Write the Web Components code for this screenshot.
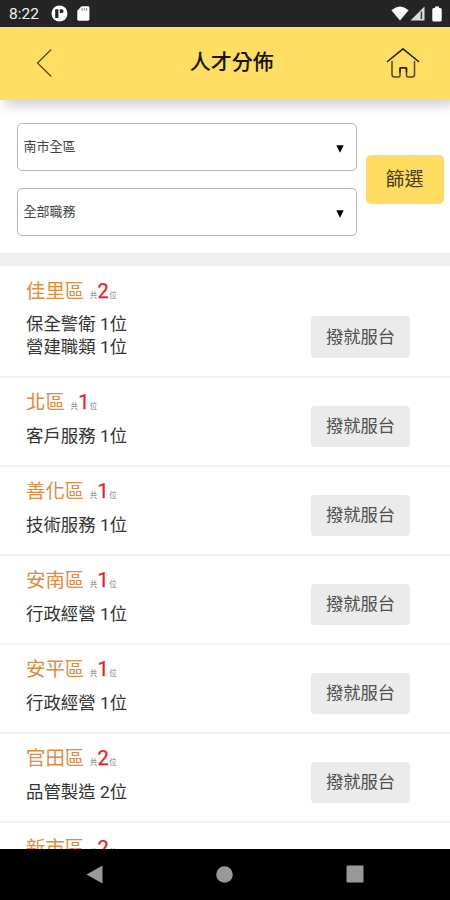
<!DOCTYPE html>
<html lang="zh-Hant">
<head>
<meta charset="utf-8">
<title>人才分佈</title>
<style>
html,body{margin:0;height:100%;background:#fff}
body{font-family:Roboto,"Noto Sans CJK TC",sans-serif;overflow:hidden}
</style>
</head>
<body>
<talent-app></talent-app>
<script>
const define = (name, html, init) => customElements.define(name, class extends HTMLElement {
  connectedCallback() {
    if (this.shadowRoot) return;
    const t = document.createElement('template');
    t.innerHTML = html;
    this.attachShadow({mode: 'open'}).append(t.content.cloneNode(true));
    if (init) init(this, this.shadowRoot);
  }
});

define('status-bar', `
<style>
:host{display:flex;align-items:center;height:27px;box-sizing:border-box;padding:0 8px 0 9px;background:#252525;color:#f4f4f4;flex:none}
.time{font-size:15.5px;line-height:27px;width:42px;padding-top:1px}
svg{display:block}
.sd{margin-left:9px}.wifi{margin-left:auto}.cell{margin-left:1px}.bat{margin-left:7px}
</style>
<span class="time">8:22</span>
<svg width="17" height="17" viewBox="0 0 17 17"><circle cx="8.5" cy="8.5" r="8" fill="#fff"/><path d="M4.2 4.2h3.200v8.800h-3.200zM8.800 4.200h1.800a1.900 1.900 0 0 1 0 3.900H8.800z" fill="#252525"/></svg>
<svg class="sd" width="13" height="15" viewBox="0 0 13 15"><path d="M4.5.3H11a1.4 1.4 0 0 1 1.4 1.4v11.6a1.4 1.4 0 0 1-1.4 1.4H1.7A1.4 1.4 0 0 1 .3 13.300V4.700z" fill="#fff"/><path d="M5 2.200v2.400M7.300 2.200v2.400M9.600 2.200v2.400" stroke="#777" stroke-width="1"/></svg>
<svg class="wifi" width="18" height="15" viewBox="0 0 18 15"><path d="M.4 4.200Q9-3.200 17.600 4.200L9 14.600z" fill="#fff"/></svg>
<svg class="cell" width="15" height="15" viewBox="0 0 15 15"><path d="M.5 14.500 14.500.5v14z" fill="#ddd"/><path d="M10.600 5.500h1.600v7.500h-1.600z" fill="#444"/></svg>
<svg class="bat" width="10" height="16" viewBox="0 0 10 16"><path d="M3 .4h4v1.600h1.200a1.500 1.500 0 0 1 1.500 1.500v10.500a1.500 1.500 0 0 1-1.500 1.500H1.800a1.500 1.500 0 0 1-1.500-1.500V3.500A1.500 1.500 0 0 1 1.800 2H3z" fill="#fff"/></svg>
`);

define('page-header', `
<style>
:host{display:grid;grid-template-columns:1fr auto 1fr;align-items:center;height:72.500px;box-sizing:border-box;padding:0 30px 0 36px;background:#ffde63;box-shadow:5px 4px 12px rgba(50,50,80,.28);z-index:1;flex:none}
h1{margin:0 0 3px 7.500px;font-size:21px;line-height:30px;font-weight:500;color:#181400}
svg{display:block}.home{justify-self:end}
</style>
<svg width="17" height="30" viewBox="0 0 17 30"><path d="M15.200 1.500 1.500 15l13.700 13.500" fill="none" stroke="#584710" stroke-width="1.200"/></svg>
<h1><slot></slot></h1>
<svg class="home" width="34" height="32" viewBox="0 0 34 32"><g fill="none" stroke="#5c4a0e" stroke-width="1.500" stroke-linejoin="round" stroke-linecap="round"><path d="M1.500 14.500 17 1.800l15.500 12.700" stroke="#201a04"/><path d="M6 14.500v13q0 2.500 2.500 2.500h4q1.500 0 1.500-1.500v-7q0-.8.800-.8h4.900q.8 0 .8.800v7q0 1.500 1.500 1.500h4q2.500 0 2.500-2.500v-13"/><path d="M14 25v-3.500q0-.8.800-.8h4.900q.8 0 .8.800V25" stroke="#201a04"/></g></svg>
`);

define('drop-field', `
<style>
:host{display:flex;align-items:center;justify-content:space-between;height:48px;box-sizing:border-box;padding:0 12px 0 6px;border:1.500px solid #b5b5b5;border-radius:5px;background:#fff;color:#444;font-size:13px}
span{line-height:20px;margin-bottom:0}
svg{display:block;margin-top:4px}
</style>
<span><slot></slot></span>
<svg width="8" height="8" viewBox="0 0 8 8"><path d="M.3.300h7.400L4 7.800z" fill="#000"/></svg>
`);

define('action-button', `
<style>
:host{display:flex;align-items:center;justify-content:center;box-sizing:border-box;width:99px;height:41.500px;border-radius:4px;background:#ebebeb;color:#505050;font-size:17.300px;line-height:24px;white-space:nowrap;flex:none}
:host([kind=primary]){width:78px;height:49px;border-radius:5px;background:#ffdd60;color:#4a4020;font-size:19px;line-height:26px}
span{margin-bottom:1px}
:host([kind=primary]) span{margin-bottom:0}
</style><span><slot></slot></span>`);

define('filter-panel', `
<style>
:host{display:flex;align-items:center;gap:9px;box-sizing:border-box;height:166.500px;padding:10.500px 6px 4px 16.500px;border-bottom:13px solid #efefef;background:#fff;flex:none}
.fields{display:grid;gap:17.500px;width:340px}
</style>
<div class="fields"><slot name="field"></slot></div><slot></slot>
`);

define('district-row', `
<style>
:host{display:flex;justify-content:space-between;align-items:flex-end;box-sizing:border-box;padding:11.600px 40px 17.600px 26px;border-bottom:2px solid #f3f3f3;background:#fff;flex:none}
h2{margin:0;font-size:19.400px;line-height:26px;height:26px;font-weight:400;color:#df8b40;white-space:nowrap}
small{font-size:7.500px;color:#777}
small:first-of-type{margin-left:.800px}
b{font-size:20px;font-weight:400;color:#ee1c25;margin:0 .3px;-webkit-text-stroke:.25px #ee1c25}
.jobs{margin-top:9.800px;min-height:22.400px;font-size:17.400px;line-height:22.400px;color:#333;white-space:nowrap}
.left{margin-bottom:-.300px}
</style>
<div class="left"><h2></h2><div class="jobs"><slot></slot></div></div>
<action-button>撥就服台</action-button>
`, (el, root) => {
  root.querySelector('h2').innerHTML = `${el.getAttribute('name')} <small>共</small><b>${el.getAttribute('total')}</b><small>位</small>`;
});

define('nav-bar', `
<style>
:host{display:flex;align-items:center;justify-content:space-between;height:51.500px;box-sizing:border-box;padding:0 86px;background:#000;flex:none;z-index:1}
svg{display:block}
</style>
<svg width="17" height="19" viewBox="0 0 17 19"><path d="M.5 9.500 16.500.5v18z" fill="#999"/></svg>
<svg width="17" height="17" viewBox="0 0 17 17"><circle cx="8.500" cy="8.500" r="8.300" fill="#999"/></svg>
<svg width="18" height="18" viewBox="0 0 18 18"><rect x=".5" y=".5" width="17" height="17" rx="1" fill="#999"/></svg>
`);

define('talent-app', `
<style>
:host{display:flex;flex-direction:column;width:450px;height:900px;background:#fff}
main{flex:1;min-height:0;overflow:hidden;display:flex;flex-direction:column}
</style>
<status-bar></status-bar>
<page-header>人才分佈</page-header>
<main>
<filter-panel><drop-field slot="field">南市全區</drop-field><drop-field slot="field">全部職務</drop-field><action-button kind="primary">篩選</action-button></filter-panel>
<district-row name="佳里區" total="2">保全警衛 1位<br>營建職類 1位</district-row>
<district-row name="北區" total="1">客戶服務 1位</district-row>
<district-row name="善化區" total="1">技術服務 1位</district-row>
<district-row name="安南區" total="1">行政經營 1位</district-row>
<district-row name="安平區" total="1">行政經營 1位</district-row>
<district-row name="官田區" total="2">品管製造 2位</district-row>
<district-row name="新市區" total="2"></district-row>
</main>
<nav-bar></nav-bar>
`);
</script>
</body>
</html>
